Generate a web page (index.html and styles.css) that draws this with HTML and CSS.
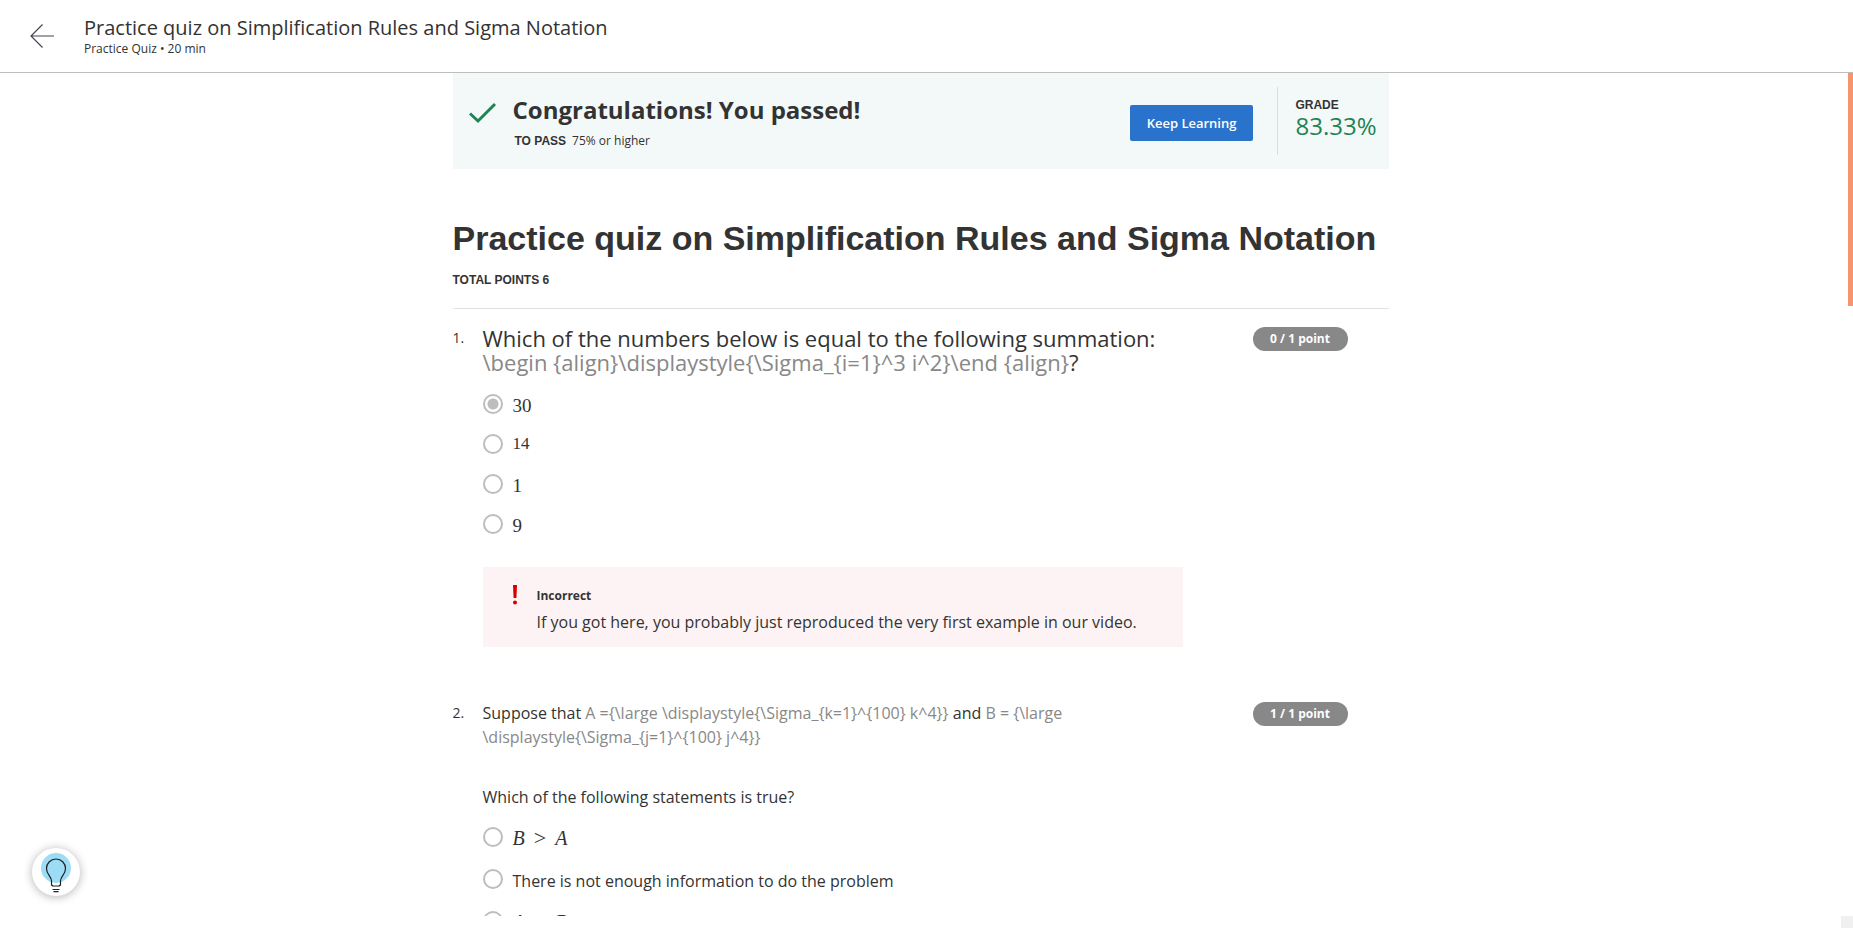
FILE: index.html
```html
<!DOCTYPE html>
<html lang="en">
<head>
<meta charset="utf-8">
<title>Practice quiz on Simplification Rules and Sigma Notation</title>
<link rel="stylesheet" href="styles.css">
</head>
<body>
<header class="topbar">
  <a class="back" href="#" aria-label="Back">
    <svg width="24" height="24" viewBox="0 0 24 24" fill="none" stroke="#454553" stroke-width="1.200"><path d="M12.500 0.500 1 12 12.500 23.500M1 12H24"/></svg>
  </a>
  <div>
    <div class="topbar-title">Practice quiz on Simplification Rules and Sigma Notation</div>
    <div class="topbar-meta">Practice Quiz • 20 min</div>
  </div>
</header>

<main class="viewport">
  <div class="content">
    <section class="banner">
      <svg class="check" width="28" height="22" viewBox="0 0 28 22" fill="none" stroke="#1f8354" stroke-width="3"><path d="M1 11.500 9 19 26 2"/></svg>
      <div class="banner-text">
        <h2 class="congrats">Congratulations! You passed!</h2>
        <p class="pass"><strong class="caps">TO PASS</strong>75% or higher</p>
      </div>
      <button class="keep" type="button">Keep Learning</button>
      <div class="grade">
        <div class="caps">GRADE</div>
        <div class="score">83.33%</div>
      </div>
    </section>

    <h1 class="title">Practice quiz on Simplification Rules and Sigma Notation</h1>
    <p class="caps total">TOTAL POINTS 6</p>

    <section class="question">
      <div class="number">1.</div>
      <div>
        <p class="prompt prompt-large">Which of the numbers below is equal to the following summation: <span class="tex">\begin {align}\displaystyle{\Sigma_{i=1}^3 i^2}\end {align}</span>?</p>
        <div class="options">
          <label class="option"><input type="radio" name="q1" checked><span class="math">30</span></label>
          <label class="option"><input type="radio" name="q1"><span class="math math-small">14</span></label>
          <label class="option"><input type="radio" name="q1"><span class="math">1</span></label>
          <label class="option"><input type="radio" name="q1"><span class="math">9</span></label>
        </div>
        <div class="feedback">
          <svg class="bang" width="6" height="20" viewBox="0 0 6 20" fill="#d30001"><path d="M1 0H5L4.400 13H1.600Z"/><circle cx="3" cy="17.500" r="2"/></svg>
          <div>
            <div class="feedback-title">Incorrect</div>
            <div class="feedback-body">If you got here, you probably just reproduced the very first example in our video.</div>
          </div>
        </div>
      </div>
      <div class="points">0 / 1 point</div>
    </section>

    <section class="question">
      <div class="number">2.</div>
      <div>
        <p class="prompt">Suppose that <span class="tex">A ={\large \displaystyle{\Sigma_{k=1}^{100} k^4}}</span> and <span class="tex">B = {\large \displaystyle{\Sigma_{j=1}^{100} j^4}}</span></p>
        <p class="prompt prompt-next">Which of the following statements is true?</p>
        <div class="options options-wide">
          <label class="option"><input type="radio" name="q2"><span class="math"><i>B</i><span class="rel">&gt;</span><i>A</i></span></label>
          <label class="option"><input type="radio" name="q2"><span class="words">There is not enough information to do the problem</span></label>
          <label class="option"><input type="radio" name="q2"><span class="math"><i>A</i><span class="rel">&gt;</span><i>B</i></span></label>
        </div>
      </div>
      <div class="points">1 / 1 point</div>
    </section>
  </div>
  <div class="thumb"></div>
</main>
<footer class="scroll-row"><div class="corner"></div></footer>

<button class="hint" type="button" aria-label="Hint">
  <svg width="48" height="48" viewBox="0 0 48 48" fill="none" stroke="#1f1f1f" stroke-width="1.200"><circle cx="24" cy="20" r="15" fill="#9ddcf5" stroke="none"/><path d="M19.500 36V33C19.500 28 14.500 27 14.500 20.500A9.500 9.500 0 0 1 33.500 20.500C33.500 27 28.500 28 28.500 33V36Q28.500 38 26.500 38H21.500Q19.500 38 19.500 36Z"/><path d="M20.500 41.500H27.500M21.500 43.700H26.500"/></svg>
</button>
</body>
</html>
```
FILE: styles.css
```css
* { box-sizing: border-box; }

body {
  margin: 0;
  height: 100vh;
  display: flex;
  flex-direction: column;
  overflow: hidden;
  background: #fff;
  color: #333;
  font-family: "Open Sans", sans-serif;
  font-size: 16px;
  line-height: 24px;
}

h1, h2, p { margin: 0; }

.topbar {
  display: flex;
  align-items: center;
  gap: 30px;
  padding: 15px 30px;
  border-bottom: 1px solid #bdbdbd;
}
.back { display: flex; }
.topbar-title { font-size: 20px; line-height: 26px; }
.topbar-meta { font-size: 12px; line-height: 16px; }

.viewport {
  position: relative;
  flex: 1;
  min-height: 0;
  overflow: hidden;
  padding-right: 12px;
}
.content { max-width: 936px; margin: 0 auto; }

.thumb {
  position: absolute;
  top: 0;
  right: 0;
  width: 5px;
  height: 233px;
  background: #f7946b;
}

.banner {
  display: flex;
  align-items: flex-start;
  height: 96px;
  padding: 14px 12px 14px 16px;
  background: #f3f9f8;
}
.check { margin: 15px 16px 0 0; }
.banner-text { flex: 1; padding-top: 5px; }
.congrats { font-size: 24px; line-height: 36px; }
.pass { font-size: 12px; line-height: 26px; padding-left: 2px; }
.pass .caps { margin-right: 6px; line-height: 26px; }
.caps {
  font-family: "Liberation Sans", Arial, sans-serif;
  font-size: 12px;
  line-height: 18px;
  font-weight: 700;
}
.keep {
  height: 36px;
  margin-top: 18px;
  padding: 0 17px;
  border: 0;
  border-radius: 2px;
  background: #2a73cc;
  color: #fff;
  font: 600 13px/18px "Open Sans", sans-serif;
}
.grade {
  align-self: stretch;
  margin-left: 24px;
  padding: 9px 0 0 17px;
  border-left: 1px solid #ddd;
}
.score { color: #1f8354; font-size: 24px; line-height: 24px; }

.title {
  margin-top: 45px;
  font: 700 34px/48px "Liberation Sans", Arial, sans-serif;
  white-space: nowrap;
}
.total {
  padding: 9px 0 19px;
  border-bottom: 1px solid #e1e1e1;
}

.question {
  display: grid;
  grid-template-columns: 30px minmax(0, 1fr) 95px;
  align-items: start;
  padding: 17px 41px 0 0;
}
.question + .question { padding-top: 54px; }
.number { font-size: 14px; }
.prompt { padding-right: 70px; }
.prompt-large { font-size: 22px; }
.prompt-next { margin-top: 36px; }
.tex { color: #888; }

.options {
  display: flex;
  flex-direction: column;
  gap: 16px;
  margin-top: 20px;
}
.options-wide { gap: 18px; margin-top: 18px; }
.option { display: flex; align-items: flex-start; gap: 10px; min-height: 24px; }
.option input {
  appearance: none;
  flex: none;
  width: 20px;
  height: 20px;
  margin: 0;
  border: 2px solid #bdbdbd;
  border-radius: 50%;
  background: #fff;
}
.option input:checked { background: radial-gradient(circle, #bdbdbd 5px, #fff 6px); }
.math {
  font-family: "Liberation Serif", "Times New Roman", serif;
  font-size: 19px;
}
.math-small { font-size: 17px; line-height: 20px; }
.options-wide .math { height: 24px; font-size: 20px; line-height: 22px; }
.rel { margin: 0 9px; font-size: 22px; }

.feedback {
  display: flex;
  gap: 19px;
  margin: 29px 70px 0 0;
  padding: 18px 29px 13px;
  background: #fdf3f4;
}
.feedback-title { margin-bottom: 3px; font-size: 12px; line-height: 22px; font-weight: 700; }
.feedback-body { white-space: nowrap; }

.points {
  margin-top: 1px;
  border-radius: 12px;
  background: #888;
  color: #fff;
  font-size: 12px;
  font-weight: 700;
  text-align: center;
}

.scroll-row { display: flex; justify-content: flex-end; }
.corner { width: 12px; height: 12px; background: #f0f0f0; }

.hint {
  position: fixed;
  left: 32px;
  bottom: 32px;
  width: 48px;
  height: 48px;
  padding: 0;
  border: 0;
  border-radius: 50%;
  background: #fff;
  box-shadow: 0 1px 10px rgba(0, 0, 0, 0.3);
}
.hint svg { display: block; }
```
